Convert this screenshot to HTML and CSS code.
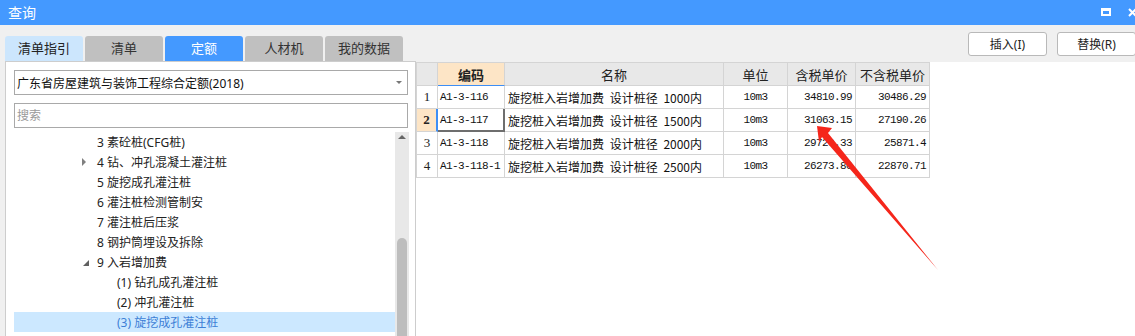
FILE: index.html
```html
<!DOCTYPE html>
<html>
<head>
	<meta http-equiv="Content-Type" content="text/html; charset=utf-8">
	<title>查询</title>
	<link rel="stylesheet" href="styles.css">
</head>
<body>
	<div class="titlebar">
		<span class="title">查询</span>
		<span class="win-btns">
			<span class="btn-max"></span>
			<svg class="btn-close" width="9" height="9" viewBox="0 0 9 9"><path d="M1 1L8 8M8 1L1 8" stroke="#fff" stroke-width="2"/></svg>
		</span>
	</div>
	<div class="main">
		<div class="left">
			<ul class="tabs">
				<li class="tab guide">清单指引</li>
				<li class="tab">清单</li>
				<li class="tab active">定额</li>
				<li class="tab">人材机</li>
				<li class="tab">我的数据</li>
			</ul>
			<div class="panel">
				<div class="select"><span>广东省房屋建筑与装饰工程综合定额(2018)</span><i class="caret"></i></div>
				<input class="search" type="text" placeholder="搜索">
				<div class="tree-wrap">
					<ul class="tree">
						<li class="lv1"><i></i>3 素砼桩(CFG桩)</li>
						<li class="lv1"><i class="closed"></i>4 钻、冲孔混凝土灌注桩</li>
						<li class="lv1"><i></i>5 旋挖成孔灌注桩</li>
						<li class="lv1"><i></i>6 灌注桩检测管制安</li>
						<li class="lv1"><i></i>7 灌注桩后压浆</li>
						<li class="lv1"><i></i>8 钢护筒埋设及拆除</li>
						<li class="lv1"><i class="open"></i>9 入岩增加费</li>
						<li class="lv2"><i></i>(1) 钻孔成孔灌注桩</li>
						<li class="lv2"><i></i>(2) 冲孔灌注桩</li>
						<li class="lv2 sel"><i></i>(3) 旋挖成孔灌注桩</li>
					</ul>
					<div class="scrollbar"><i class="up"></i><div class="thumb"></div></div>
				</div>
			</div>
		</div>
		<div class="right">
			<div class="tools">
				<button>插入(I)</button>
				<button>替换(R)</button>
			</div>
			<div class="grid-area">
				<table class="grid">
					<colgroup>
						<col style="width:21px"><col style="width:67px"><col style="width:219px"><col style="width:64px"><col style="width:68px"><col style="width:74px">
					</colgroup>
					<tr>
						<th></th><th class="cur">编码</th><th>名称</th><th>单位</th><th>含税单价</th><th>不含税单价</th>
					</tr>
					<tr>
						<td class="rh">1</td><td class="code">A1-3-116</td><td class="name">旋挖桩入岩增加费 设计桩径 1000内</td><td class="unit">10m3</td><td class="num">34810.99</td><td class="num">30486.29</td>
					</tr>
					<tr>
						<td class="rh cur">2</td><td class="code focus">A1-3-117</td><td class="name">旋挖桩入岩增加费 设计桩径 1500内</td><td class="unit">10m3</td><td class="num">31063.15</td><td class="num">27190.26</td>
					</tr>
					<tr>
						<td class="rh">3</td><td class="code">A1-3-118</td><td class="name">旋挖桩入岩增加费 设计桩径 2000内</td><td class="unit">10m3</td><td class="num">29720.33</td><td class="num">25871.4</td>
					</tr>
					<tr>
						<td class="rh">4</td><td class="code">A1-3-118-1</td><td class="name">旋挖桩入岩增加费 设计桩径 2500内</td><td class="unit">10m3</td><td class="num">26273.80</td><td class="num">22870.71</td>
					</tr>
				</table>
			</div>
		</div>
	</div>
	<!-- 标注箭头 -->
	<svg class="mark" width="1135" height="336" viewBox="0 0 1135 336">
		<polygon points="817,126 832,128 828,133 938,270 822,137 819,142" fill="#f5261b"/>
	</svg>
</body>
</html>
```

FILE: styles.css
```css
*{margin: 0; padding: 0; box-sizing: border-box;}
html, body{width: 1135px; height: 336px; overflow: hidden;}
body{position: relative; background: #f0f0f0; color: #222; font: 12px "Noto Sans", "Noto Sans CJK SC", sans-serif;}

.titlebar{height: 25px; background: #4499ff; color: #fff; display: flex; align-items: center; justify-content: space-between; padding-left: 8px;}
.title{font-size: 14px; line-height: 25px;}
.win-btns{display: flex; align-items: center; gap: 17px; margin-right: -2px;}
.btn-max{width: 10px; height: 8px; border: 2px solid #fff; border-top-width: 3px; margin-top: -1px;}
.btn-close{display: block;}

.main{display: flex; height: 311px;}
.left{width: 416px; flex: none; padding: 11px 0 0 5px; display: flex; flex-direction: column;}
.tabs{display: flex; gap: 2px; list-style: none; height: 25px;}
.tab{width: 78px; background: #c0c0c0; border-radius: 3px 3px 0 0; text-align: center; line-height: 25px; font-size: 13px; color: #333;}
.tab.guide{background: #cce6fd; color: #222;}
.tab.active{background: #4499ff; color: #fff;}

.panel{flex: 1; background: #fff; border: 1px solid #cdcdcd; border-bottom: 0; padding: 8px 0 0 8px; display: flex; flex-direction: column; min-height: 0;}
.select{width: 394px; height: 25px; border: 1px solid #a9a9a9; display: flex; align-items: center; justify-content: space-between; padding: 0 5px 0 2px; font-size: 12px; color: #111;}
.caret{width: 0; height: 0; border-top: 3px solid #777; border-left: 3px solid transparent; border-right: 3px solid transparent;}
.search{width: 394px; height: 25px; margin-top: 8px; border: 1px solid #a9a9a9; padding-left: 2px; font: inherit; outline: none; background: #fff;}
.search::placeholder{color: #9a9a9a;}

.tree-wrap{display: flex; margin-top: 4px; flex: 1; min-height: 0; overflow: hidden;}
.tree{width: 381px; list-style: none;}
.tree li{height: 20px; display: flex; align-items: center; white-space: nowrap; font-size: 12px; color: #222;}
.tree .lv1{padding-left: 67px;}
.tree .lv2{padding-left: 87px;}
.tree li i{width: 16px; height: 20px; flex: none; display: flex; align-items: center;}
.tree li i.closed::before{content: ""; border-left: 4px solid #808080; border-top: 4px solid transparent; border-bottom: 4px solid transparent; margin-left: 1px;}
.tree li i.open::before{content: ""; border-bottom: 6px solid #606060; border-left: 6px solid transparent; margin-left: 2px; margin-top: 2px;}
.tree li.sel{background: #cce8ff; color: #3d7fd6;}

.scrollbar{width: 14px; background: #e8e8e8; display: flex; flex-direction: column; align-items: center; padding-top: 3px;}
.scrollbar .up{width: 0; height: 0; border-bottom: 4px solid #666; border-left: 4px solid transparent; border-right: 4px solid transparent;}
.scrollbar .thumb{width: 10px; flex: 1; margin-top: 99px; background: #bdbdbd; border-radius: 5px 5px 0 0;}

.right{flex: 1; display: flex; flex-direction: column;}
.tools{display: flex; justify-content: flex-end; gap: 10px; height: 24px; margin-top: 7px; margin-right: -1px;}
.tools button{flex: none; width: 79px; height: 24px; background: #fff; border: 1px solid #b9b9b9; border-radius: 3px; font: 12px "Noto Sans", "Noto Sans CJK SC", sans-serif; color: #222;}
.grid-area{margin-top: 6px; flex: 1; background: #fff;}

.grid{table-layout: fixed; width: 514px; border-collapse: separate; border-spacing: 0; border-top: 1px solid #d4d4d4; border-left: 1px solid #d4d4d4;}
.grid th, .grid td{height: 23px; border-right: 1px solid #d4d4d4; border-bottom: 1px solid #d4d4d4; padding: 0; white-space: nowrap; overflow: hidden;}
.grid th{background: #e8e8e8; font-size: 13px; font-weight: normal; text-align: center; color: #222;}
.grid th.cur{background: #fde5c6; font-weight: bold; border-bottom-color: #3d8ef5;}
.grid .rh{text-align: center; font: 13px "Liberation Serif", serif; color: #222;}
.grid .rh.cur{background: #fde5c6; font-weight: bold; border-right: 2px solid #3d8ef5;}
.grid .code{padding-left: 2px; font: 11px "Liberation Mono", monospace; letter-spacing: -0.6px; color: #111;}
.grid .code.focus{border-right: 2px solid #6e6e6e; border-bottom: 2px solid #6e6e6e;}
.grid .name{padding-left: 3px; font: 12px "Noto Sans CJK SC", sans-serif; word-spacing: 3px; color: #111;}
.grid .unit{text-align: center; font: 11px "Liberation Mono", monospace; letter-spacing: -0.6px; color: #111;}
.grid .num{text-align: right; padding-right: 3px; font: 11px "Liberation Mono", monospace; letter-spacing: -0.6px; color: #111;}

.mark{position: absolute; left: 0; top: 0; pointer-events: none;}
```
